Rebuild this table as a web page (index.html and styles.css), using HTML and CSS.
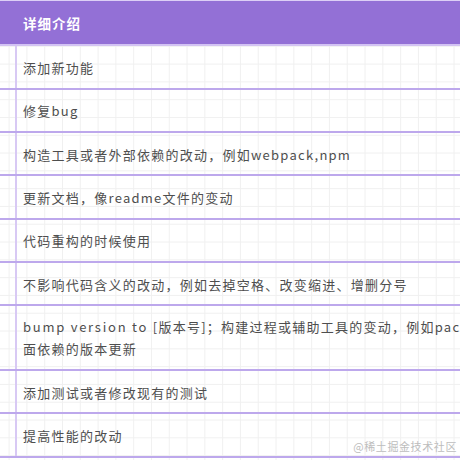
FILE: index.html
```html
<!DOCTYPE html>
<html lang="zh">
<head>
<meta charset="utf-8">
<link rel="stylesheet" href="styles.css">
</head>
<body>
<div class="page">
  <div class="table">
    <div class="head">详细介绍</div>
    <div class="row"><div class="gutter"></div><div class="cell">添加新功能</div></div>
    <div class="row"><div class="gutter"></div><div class="cell">修复bug</div></div>
    <div class="row"><div class="gutter"></div><div class="cell">构造工具或者外部依赖的改动，例如webpack,npm</div></div>
    <div class="row"><div class="gutter"></div><div class="cell">更新文档，像readme文件的变动</div></div>
    <div class="row"><div class="gutter"></div><div class="cell">代码重构的时候使用</div></div>
    <div class="row"><div class="gutter"></div><div class="cell">不影响代码含义的改动，例如去掉空格、改变缩进、增删分号</div></div>
    <div class="row tall"><div class="gutter"></div><div class="cell"><span class="lat">bump version to </span>[版本号]；构建过程或辅助工具的变动，例如package.json里<br>面依赖的版本更新</div></div>
    <div class="row"><div class="gutter"></div><div class="cell">添加测试或者修改现有的测试</div></div>
    <div class="row"><div class="gutter"></div><div class="cell">提高性能的改动</div></div>
  </div>
  <div class="watermark">@稀土掘金技术社区</div>
</div>
</body>
</html>
```
FILE: styles.css
```css
html, body {
  margin: 0;
  padding: 0;
  width: 460px;
  height: 460px;
  overflow: hidden;
  background: #fff;
}
.page {
  position: relative;
  width: 460px;
  height: 460px;
  overflow: hidden;
  font-family: "Noto Sans CJK SC", "Noto Sans", sans-serif;
  background-color: #fff;
  background-image:
    linear-gradient(to right, #f0f0f0 1px, transparent 1px),
    linear-gradient(to bottom, #f0f0f0 1px, transparent 1px);
  background-size: 17.8px 17.8px;
  background-position: 8.6px 10.2px;
}
.table {
  width: 900px;
}
.head {
  box-sizing: border-box;
  height: 46.4px;
  border-top: 1px solid #dccff6;
  border-bottom: 2px solid #d3c3f3;
  background: #9370d6;
  color: #fff;
  font-weight: 700;
  font-size: 13.5px;
  letter-spacing: 1px;
  padding-left: 23px;
  display: flex;
  align-items: center;
}
.row {
  display: flex;
  height: 41.3px;
  border-bottom: 2px solid #bda8ec;
}
.row.tall {
  height: 63px;
}
.gutter {
  width: 15px;
  border-right: 2px solid #d8c9f4;
  flex: none;
}
.cell {
  display: flex;
  align-items: center;
  padding-left: 6px;
  padding-top: 2px;
  white-space: nowrap;
  color: #4e4e4e;
  font-size: 13px;
  letter-spacing: 1.25px;
  line-height: 22px;
}
.lat {
  letter-spacing: 1.75px;
}
.row.tall .cell {
  display: block;
  padding-top: 10px;
}
.watermark {
  position: absolute;
  right: 3px;
  bottom: 6px;
  font-size: 11px;
  color: #bdbdbd;
  letter-spacing: 0.6px;
}
```
